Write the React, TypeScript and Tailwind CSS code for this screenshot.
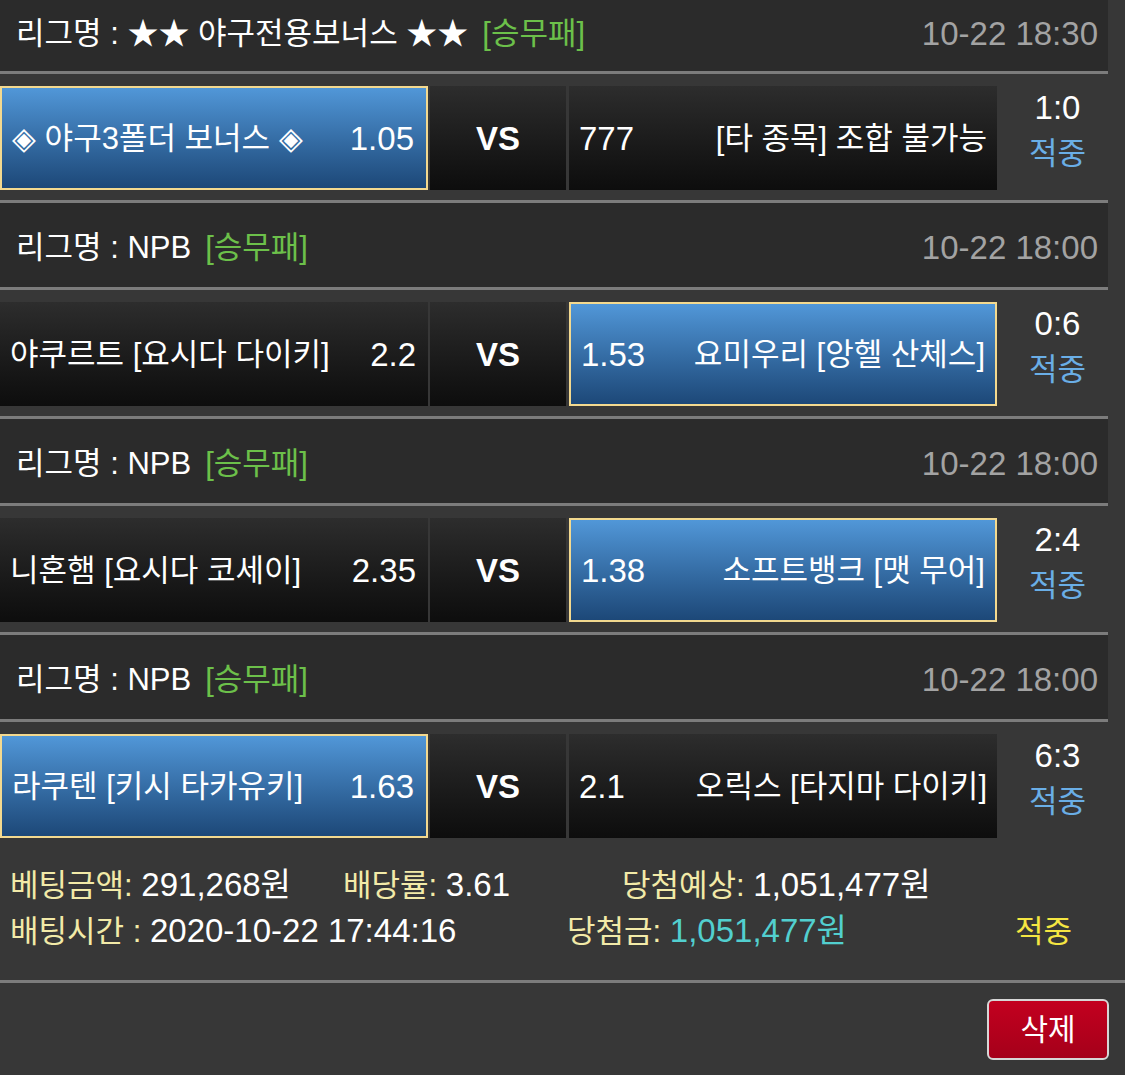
import React from "react";

type Side = { name: string; odds: string; picked?: boolean };

interface Match {
  league: string;
  time: string;
  home: Side;
  away: Side;
  score: string;
}

const matches: Match[] = [
  {
    league: "★★ 야구전용보너스 ★★",
    time: "10-22 18:30",
    home: { name: "◈ 야구3폴더 보너스 ◈", odds: "1.05", picked: true },
    away: { name: "[타 종목] 조합 불가능", odds: "777" },
    score: "1:0",
  },
  {
    league: "NPB",
    time: "10-22 18:00",
    home: { name: "야쿠르트 [요시다 다이키]", odds: "2.2" },
    away: { name: "요미우리 [앙헬 산체스]", odds: "1.53", picked: true },
    score: "0:6",
  },
  {
    league: "NPB",
    time: "10-22 18:00",
    home: { name: "니혼햄 [요시다 코세이]", odds: "2.35" },
    away: { name: "소프트뱅크 [맷 무어]", odds: "1.38", picked: true },
    score: "2:4",
  },
  {
    league: "NPB",
    time: "10-22 18:00",
    home: { name: "라쿠텐 [키시 타카유키]", odds: "1.63", picked: true },
    away: { name: "오릭스 [타지마 다이키]", odds: "2.1" },
    score: "6:3",
  },
];

// numbers render a bit larger than the korean text in the original
const num = "text-[33px]";
const boxBase = "h-[104px] flex items-center justify-between text-white";
const picked = "bg-linear-to-b from-[#5197d8] to-[#1d4878] border-2 border-[#f3d98f]";
const plain = "bg-linear-to-b from-[#2d2d2d] to-[#0d0d0d]";

function Line() {
  return <div className="h-[3px] w-[1108px] bg-[#7c7c7c]" />;
}

function League({ m, first }: { m: Match; first?: boolean }) {
  return (
    <div
      className={
        "w-[1108px] bg-[#2b2b2b] flex items-center justify-between pl-[16px] pr-[10px] " +
        (first ? "h-[71px] pb-[4px]" : "h-[84px] pt-[4px]")
      }
    >
      <div className="text-white whitespace-pre">
        리그명 : {m.league}
        <span className="text-[#6cc04a] ml-[14px]">[승무패]</span>
      </div>
      <div className={`text-[#a3a3a3] ${num}`}>{m.time}</div>
    </div>
  );
}

function Row({ m }: { m: Match }) {
  return (
    <div className="w-[1108px] h-[126px] pt-[12px] pb-[10px] flex">
      <div className={`${boxBase} w-[428px] pl-[10px] pr-[12px] ${m.home.picked ? picked : plain}`}>
        <span>{m.home.name}</span>
        <span className={num}>{m.home.odds}</span>
      </div>
      <div className={`${boxBase} ml-[2px] w-[136px] justify-center! font-bold ${num} ${plain}`}>VS</div>
      <div className={`${boxBase} ml-[3px] w-[428px] pl-[10px] pr-[10px] ${m.away.picked ? picked : plain}`}>
        <span className={num}>{m.away.odds}</span>
        <span>{m.away.name}</span>
      </div>
      <div className="flex-1 flex flex-col items-center justify-center pl-[10px] pb-[14px] leading-[46px]">
        <span className={`text-white ${num}`}>{m.score}</span>
        <span className="text-[#6aaee6]">적중</span>
      </div>
    </div>
  );
}

export default function App() {
  return (
    <div className="w-[1125px] h-[1075px] bg-[#373737] overflow-hidden font-['Liberation_Sans','Noto_Sans_CJK_KR',sans-serif] text-[31px] leading-none">
      {matches.map((m, i) => (
        <div key={i}>
          {i > 0 && <Line />}
          <League m={m} first={i === 0} />
          <Line />
          <Row m={m} />
        </div>
      ))}

      <div className="h-[132px] pt-[14px] pl-[10px] leading-[45px]">
        <div className="flex items-baseline">
          <span className="w-[333px]">
            <span className="text-[#f2eaa8]">베팅금액:</span> <span className={`text-white ${num}`}>291,268원</span>
          </span>
          <span className="w-[279px]">
            <span className="text-[#f2eaa8]">배당률:</span> <span className={`text-white ${num}`}>3.61</span>
          </span>
          <span>
            <span className="text-[#f2eaa8]">당첨예상:</span> <span className={`text-white ${num}`}>1,051,477원</span>
          </span>
        </div>
        <div className="flex items-baseline">
          <span className="w-[557px]">
            <span className="text-[#f2eaa8]">배팅시간 :</span> <span className={`text-white ${num}`}>2020-10-22 17:44:16</span>
          </span>
          <span className="w-[448px]">
            <span className="text-[#f2eaa8]">당첨금:</span> <span className={`text-[#52cfcf] ${num}`}>1,051,477원</span>
          </span>
          <span className="text-[#f5e642]">적중</span>
        </div>
      </div>

      <div className="h-[3px] w-full bg-[#7c7c7c]" />

      <div className="flex justify-end pt-[16px] pr-[16px]">
        <button className="w-[122px] h-[61px] rounded-md border-2 border-[#d6d6d6] bg-linear-to-b from-[#c3001f] to-[#a5001a] text-white text-[30px] flex items-center justify-center">
          삭제
        </button>
      </div>
    </div>
  );
}
